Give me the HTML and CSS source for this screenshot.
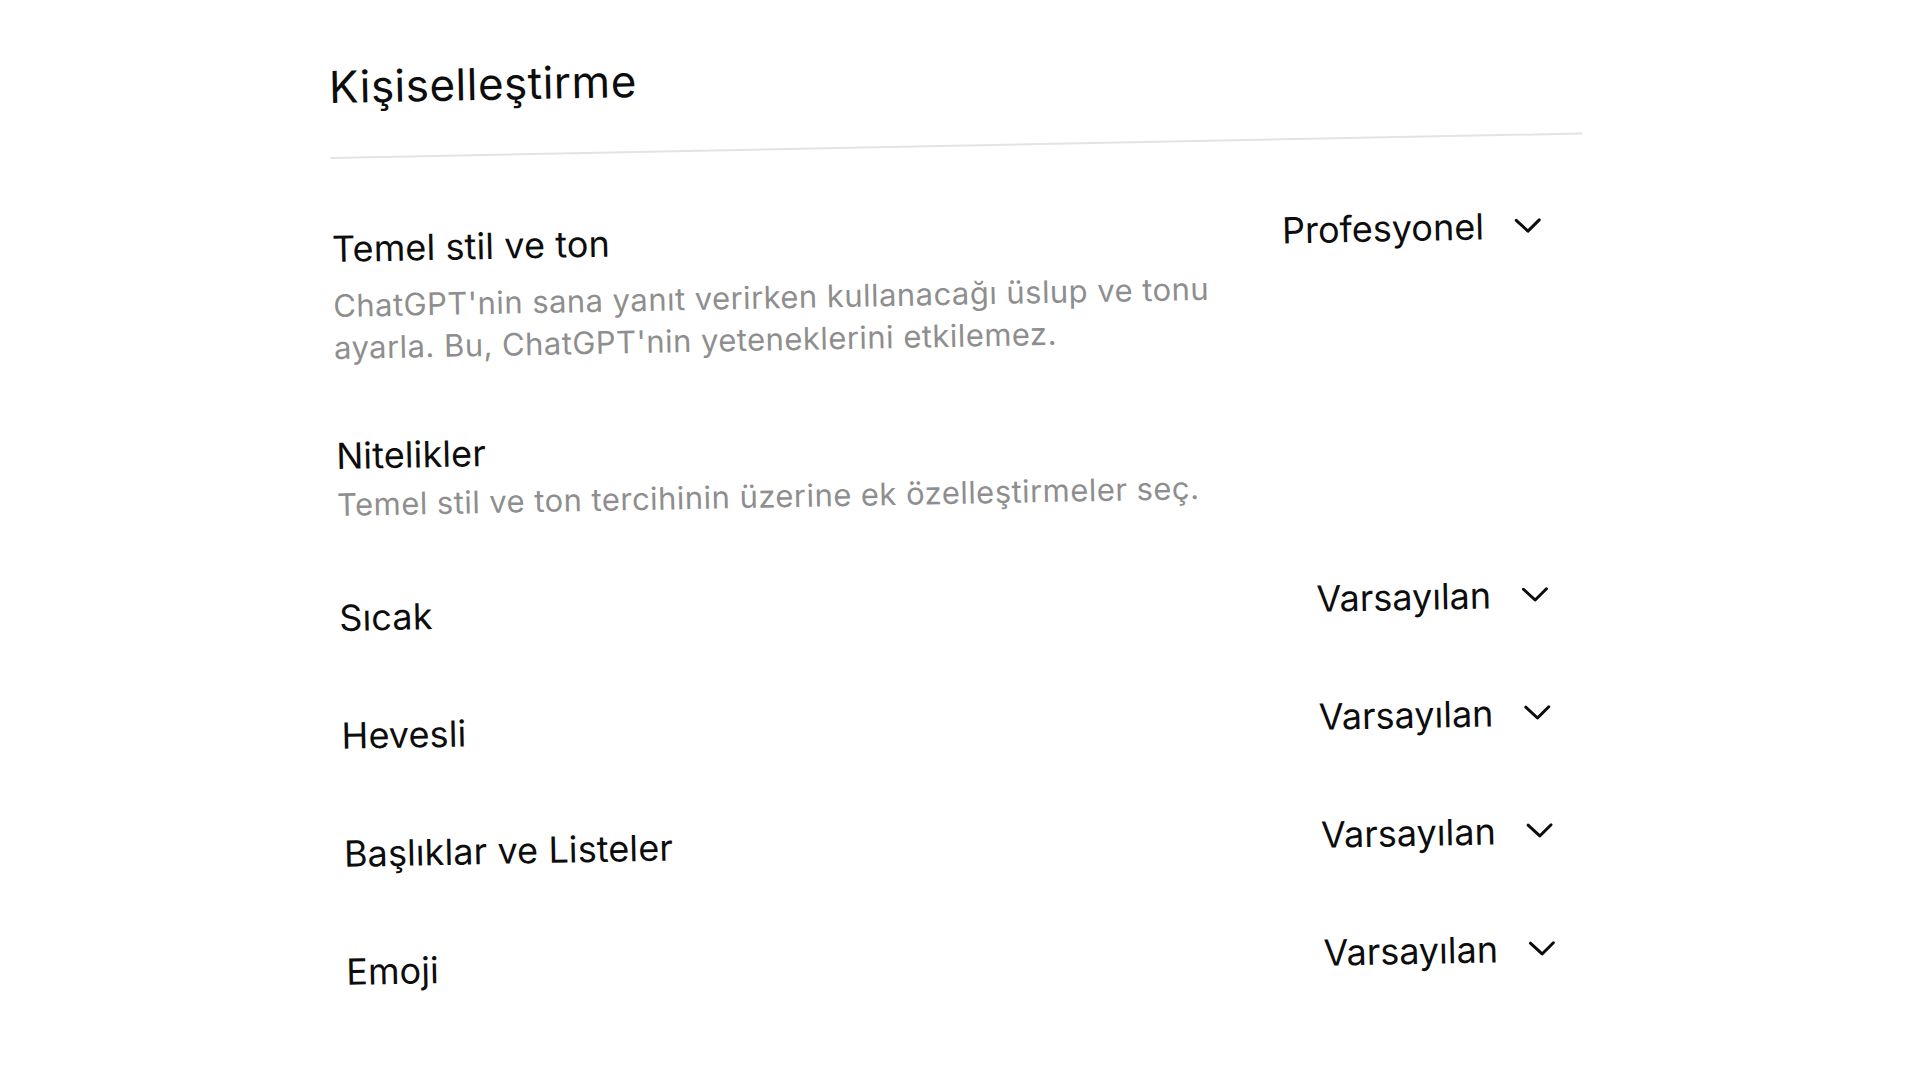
FILE: index.html
```html
<!DOCTYPE html>
<html lang="tr">
<head>
    <meta charset="UTF-8">
    <meta name="viewport" content="width=device-width, initial-scale=1.0">
    <title>Kişiselleştirme</title>
    <link rel="stylesheet" href="styles.css">
</head>
<body>

    <main class="settings">
        <h1 class="settings-title">Kişiselleştirme</h1>
        <hr class="divider">

        <div class="sections">
            <section class="section">
                <div class="row">
                    <span class="row-label">Temel stil ve ton</span>
                    <button class="select" type="button">
                        Profesyonel
                        <svg class="chevron" width="28" height="16" viewBox="0 0 28 16"><path d="M2.5 2.5 L14 13.5 L25.5 2.5" /></svg>
                    </button>
                </div>
                <p class="row-desc">ChatGPT'nin sana yanıt verirken kullanacağı üslup ve tonu ayarla. Bu, ChatGPT'nin yeteneklerini etkilemez.</p>
            </section>

            <section class="section">
                <div class="row-label">Nitelikler</div>
                <p class="row-desc">Temel stil ve ton tercihinin üzerine ek özelleştirmeler seç.</p>

                <ul class="options">
                    <li class="row">
                        <span class="row-label">Sıcak</span>
                        <button class="select" type="button">
                            Varsayılan
                            <svg class="chevron" width="28" height="16" viewBox="0 0 28 16"><path d="M2.5 2.5 L14 13.5 L25.5 2.5" /></svg>
                        </button>
                    </li>
                    <li class="row">
                        <span class="row-label">Hevesli</span>
                        <button class="select" type="button">
                            Varsayılan
                            <svg class="chevron" width="28" height="16" viewBox="0 0 28 16"><path d="M2.5 2.5 L14 13.5 L25.5 2.5" /></svg>
                        </button>
                    </li>
                    <li class="row">
                        <span class="row-label">Başlıklar ve Listeler</span>
                        <button class="select" type="button">
                            Varsayılan
                            <svg class="chevron" width="28" height="16" viewBox="0 0 28 16"><path d="M2.5 2.5 L14 13.5 L25.5 2.5" /></svg>
                        </button>
                    </li>
                    <li class="row">
                        <span class="row-label">Emoji</span>
                        <button class="select" type="button">
                            Varsayılan
                            <svg class="chevron" width="28" height="16" viewBox="0 0 28 16"><path d="M2.5 2.5 L14 13.5 L25.5 2.5" /></svg>
                        </button>
                    </li>
                </ul>
            </section>
        </div>
    </main>

</body>
</html>
```

FILE: styles.css
```css
body {
    margin: 0;
    background-color: #fff;
    color: #0d0d0d;
    font-family: Inter, "Noto Sans", "Liberation Sans", sans-serif;
}

/* the shot is tilted a little, so the whole panel is too */
.settings {
    width: 1252px;
    margin: 40px 0 0 328px;
    transform: rotate(-1.12deg);
    transform-origin: 0 0;
}

.settings-title {
    margin: 0;
    padding-top: 21px;
    font-size: 44px;
    line-height: 52px;
    font-weight: 400;
    letter-spacing: 0.5px;
}

.divider {
    margin: 44px 0 0;
    border: 0;
    border-top: 2px solid #e3e3e3;
}

.sections {
    display: flex;
    flex-direction: column;
    gap: 65px;
    margin-top: 60px;
}

.row {
    display: flex;
    justify-content: space-between;
    align-items: center;
    height: 60px;
    padding-right: 42px;
}

.row-label {
    font-size: 36px;
    line-height: 44px;
    letter-spacing: 0.1px;
}

.row-desc {
    max-width: 920px;
    margin: 6px 0 0;
    font-size: 31px;
    line-height: 42px;
    letter-spacing: 0.45px;
    color: #8e8e8e;
}

.select {
    display: flex;
    align-items: center;
    gap: 30px;
    height: 60px;
    padding: 0;
    border: 0;
    background: none;
    color: inherit;
    font: inherit;
    font-size: 36px;
    line-height: 44px;
    cursor: pointer;
}

.chevron {
    fill: none;
    stroke: #0d0d0d;
    stroke-width: 3;
    stroke-linecap: round;
    stroke-linejoin: round;
}

.options {
    display: flex;
    flex-direction: column;
    gap: 58px;
    margin: 62px 0 0;
    padding: 0;
    list-style: none;
}
```
